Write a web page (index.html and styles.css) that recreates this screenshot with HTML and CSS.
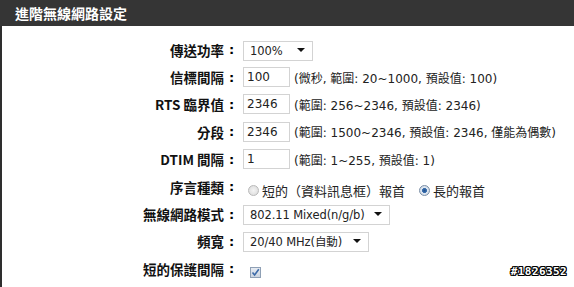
FILE: index.html
```html
<!DOCTYPE html>
<html lang="zh-Hant">
<head>
    <meta charset="UTF-8">
    <title>進階無線網路設定</title>
    <link rel="stylesheet" href="styles.css">
</head>
<body>
    <div class="panel">
        <h1 class="title">進階無線網路設定</h1>
        <div class="box">
            <div class="row">
                <span class="label">傳送功率</span><span class="colon">:</span>
                <span class="select w70"><select><option>100%</option></select></span>
            </div>
            <div class="row">
                <span class="label">信標間隔</span><span class="colon">:</span>
                <input class="field" type="text" value="100">
                <span class="hint">(微秒, 範圍: 20~1000, 預設值: 100)</span>
            </div>
            <div class="row">
                <span class="label">RTS 臨界值</span><span class="colon">:</span>
                <input class="field" type="text" value="2346">
                <span class="hint">(範圍: 256~2346, 預設值: 2346)</span>
            </div>
            <div class="row">
                <span class="label">分段</span><span class="colon">:</span>
                <input class="field" type="text" value="2346">
                <span class="hint">(範圍: 1500~2346, 預設值: 2346, 僅能為偶數)</span>
            </div>
            <div class="row">
                <span class="label">DTIM 間隔</span><span class="colon">:</span>
                <input class="field" type="text" value="1">
                <span class="hint">(範圍: 1~255, 預設值: 1)</span>
            </div>
            <div class="row">
                <span class="label">序言種類</span><span class="colon">:</span>
                <label class="opt low"><input type="radio" name="pre" disabled> 短的（資料訊息框）報首</label>
                <label class="opt low"><input type="radio" name="pre" checked> 長的報首</label>
            </div>
            <div class="row">
                <span class="label">無線網路模式</span><span class="colon">:</span>
                <span class="select w147"><select><option>802.11 Mixed(n/g/b)</option></select></span>
            </div>
            <div class="row">
                <span class="label">頻寬</span><span class="colon">:</span>
                <span class="select w126"><select><option>20/40 MHz(自動)</option></select></span>
            </div>
            <div class="row">
                <span class="label">短的保護間隔</span><span class="colon">:</span>
                <span class="check low">
                    <svg width="9" height="9" viewBox="0 0 9 9"><path d="M1.5 4.5 L3.6 7 L7.8 1.2" fill="none" stroke="#3c6aa8" stroke-width="1.6"/></svg>
                </span>
            </div>
        </div>
    </div>
    <div class="mark">#1826352</div>
</body>
</html>
```

FILE: styles.css
```css
body {
    margin: 0;
    background: #fff;
    font-family: "DejaVu Sans", "Noto Sans CJK TC", sans-serif;
    width: 574px;
    height: 287px;
    overflow: hidden;
    position: relative;
}

.title {
    margin: 0;
    height: 26px;
    line-height: 26px;
    padding-left: 15px;
    background-color: #353535;
    color: #fff;
    font-family: "Noto Sans CJK TC", sans-serif;
    font-size: 14px;
    font-weight: bold;
}

.box {
    border-left: 2px solid #2e2e2e;
    height: 261px;
    padding-top: 10px;
    box-sizing: border-box;
}

.row {
    display: flex;
    align-items: center;
    height: 27.4px;
}

.label {
    width: 222px;
    text-align: right;
    font-family: "Noto Sans CJK TC", sans-serif;
    font-size: 13.5px;
    font-weight: bold;
    color: #111;
}

.colon {
    width: 19px;
    padding-left: 5px;
    box-sizing: border-box;
    font-size: 13px;
    font-weight: bold;
}

.field {
    width: 47px;
    height: 20px;
    box-sizing: border-box;
    border: 1px solid #d3d3d3;
    padding: 0 0 0 3px;
    font-family: "DejaVu Sans", "Noto Sans CJK TC", sans-serif;
    font-size: 12px;
    color: #222;
    outline: none;
}

.hint {
    margin-left: 4px;
    font-size: 12px;
    color: #222;
}

.select {
    position: relative;
    display: inline-block;
    height: 20px;
}

.select select {
    appearance: none;
    -webkit-appearance: none;
    width: 100%;
    height: 20px;
    border: 1px solid #d3d3d3;
    background: #fff;
    padding: 0 0 0 6px;
    font-family: "DejaVu Sans", "Noto Sans CJK TC", sans-serif;
    font-size: 11.5px;
    letter-spacing: -0.1px;
    color: #222;
    outline: none;
}

.select::after {
    content: "";
    position: absolute;
    right: 8px;
    top: 8px;
    border-left: 4px solid transparent;
    border-right: 4px solid transparent;
    border-top: 4px solid #111;
}

.w70 { width: 70px; }
.w147 { width: 147px; }
.w126 { width: 126px; }

.low {
    margin-top: 7px;
}

.opt {
    display: flex;
    align-items: center;
    margin-right: 9px;
    font-family: "Noto Sans CJK TC", sans-serif;
    font-size: 13px;
    color: #222;
}

.opt input {
    appearance: none;
    -webkit-appearance: none;
    width: 11px;
    height: 11px;
    margin: 0 3px 0 5px;
    border-radius: 50%;
    border: 1px solid #b9b9b9;
    background: radial-gradient(circle, #f4f4f4 0, #d9d9d9 100%);
}

.opt input:checked {
    border-color: #7a8ea6;
    background: radial-gradient(circle, #1f4f8c 0, #3b6fae 2.2px, #dfe7f1 2.8px, #c9d3df 100%);
}

.check {
    display: flex;
    align-items: center;
    justify-content: center;
    width: 11px;
    height: 11px;
    margin-left: 7px;
    border: 1px solid #8fa0b5;
    background: linear-gradient(#e6ebf2, #cbd4e0);
    box-sizing: border-box;
}

.mark {
    position: absolute;
    right: 7px;
    bottom: 9px;
    font-family: "DejaVu Sans Mono", monospace;
    font-size: 11px;
    font-weight: bold;
    letter-spacing: 0.4px;
    color: #fff;
    text-shadow: 1px 0 #000, -1px 0 #000, 0 1px #000, 0 -1px #000, 1px 1px #000, -1px -1px #000, 1px -1px #000, -1px 1px #000;
}
```
